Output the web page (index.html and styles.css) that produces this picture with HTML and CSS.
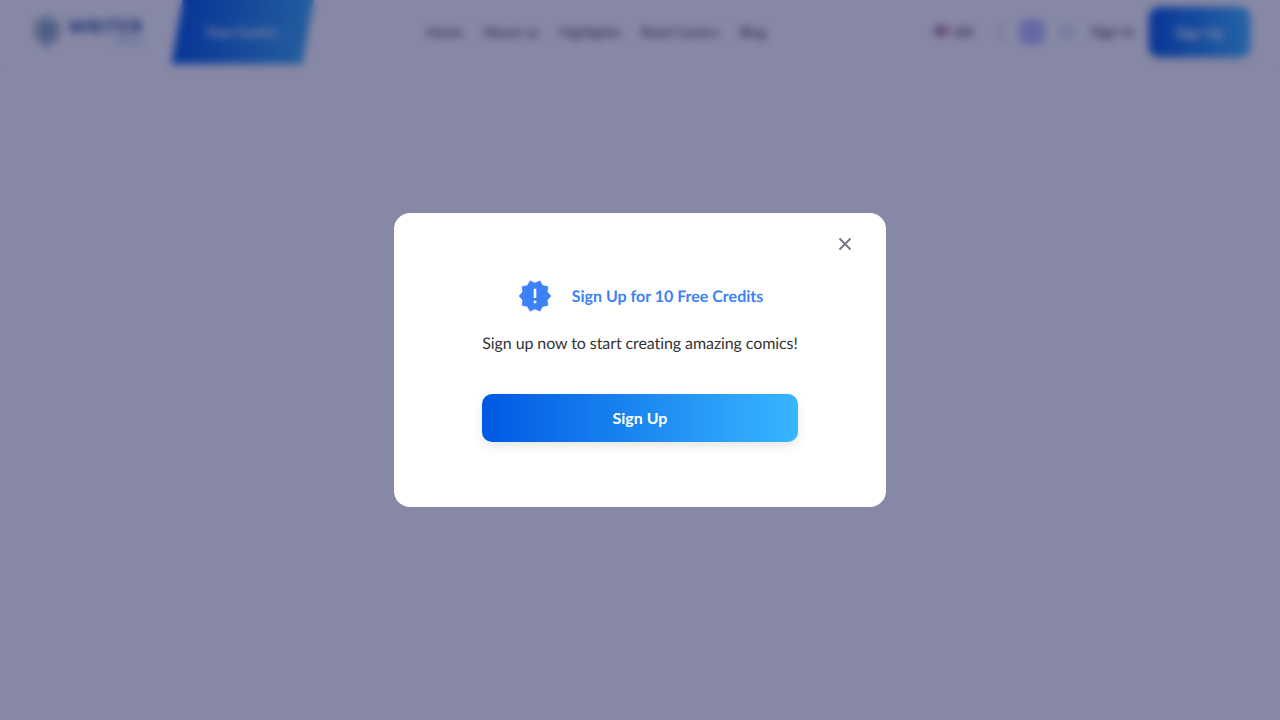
FILE: index.html
```html
<!DOCTYPE html>
<html lang="en">
<head>
<meta charset="utf-8">
<title>Sign Up for 10 Free Credits</title>
<link rel="stylesheet" href="styles.css">
</head>
<body>
<header class="topbar">
  <a class="logo">
    <svg class="logo-mark" viewBox="0 0 32 36"><path d="M16 1l13 7v15l-13 12L3 23V8z" fill="#a5bccd"/><circle cx="16" cy="17" r="6" fill="#7f9ab2"/></svg>
    <span class="logo-text"><b>WRITER</b><i>comics</i></span>
  </a>
  <a class="promo"><span>Free Comics</span></a>
  <nav class="nav">
    <a>Home</a><a>About us</a><a>Highlights</a><a>Read Comics</a><a>Blog</a>
  </nav>
  <div class="actions">
    <span class="lang"><svg class="flag" viewBox="0 0 14 10"><rect width="14" height="10" fill="#e7d3d8"/><rect width="14" height="3" fill="#c0394b"/><rect y="6" width="14" height="2" fill="#c0394b"/><rect width="6" height="5" fill="#44508f"/></svg>EN</span>
    <span class="faint"></span>
    <span class="square"></span>
    <span class="faint-blue"></span>
    <a class="signin">Sign In</a>
    <a class="signup-top">Sign Up</a>
  </div>
</header>
<div class="overlay">
  <section class="modal">
    <button class="close" aria-label="Close">
      <svg viewBox="0 0 14 14"><path d="M1.5 1.5l11 11M12.5 1.5l-11 11"/></svg>
    </button>
    <div class="title-row">
      <svg class="seal" viewBox="1 1 22 22"><path d="M23 12l-2.44-2.78.34-3.68-3.61-.82-1.89-3.18L12 3 8.6 1.54 6.71 4.72l-3.61.81.34 3.68L1 12l2.44 2.78-.34 3.69 3.61.82 1.89 3.18L12 21l3.4 1.46 1.89-3.18 3.61-.82-.34-3.68L23 12z"/><path class="mark" d="M11.1 7h1.8v6.4h-1.8zM11.1 15.2h1.8V17h-1.8z"/></svg>
      <h2 class="title">Sign Up for 10 Free Credits</h2>
    </div>
    <p class="lead">Sign up now to start creating amazing comics!</p>
    <button class="cta">Sign Up</button>
  </section>
</div>
</body>
</html>
```
FILE: styles.css
```css
* { box-sizing: border-box; }
html, body { height: 100%; }
body {
  margin: 0;
  background: #fff;
  font-family: Lato, "Open Sans", sans-serif;
  text-rendering: geometricPrecision;
  overflow: hidden;
}
.topbar {
  display: flex;
  align-items: center;
  height: 64px;
  padding-left: 30px;
  background: #fff;
  box-shadow: 0 1px 4px rgba(0,0,0,.04);
}
.logo { display: flex; align-items: center; gap: 4px; width: 117px; }
.logo-mark { width: 34px; height: 36px; }
.logo-text { display: flex; flex-direction: column; }
.logo-text b { font-size: 18px; line-height: 18px; font-weight: 900; letter-spacing: 1px; color: #1d4f9c; }
.logo-text i { font-size: 10px; line-height: 12px; font-style: normal; color: #5fb3dc; text-align: right; }
.promo {
  display: flex;
  align-items: center;
  justify-content: center;
  align-self: stretch;
  width: 131px;
  margin-left: 30px;
  background: linear-gradient(90deg, #0059e3, #38a8f0);
  transform: skewX(-10deg);
  color: #fff;
  font-size: 13px;
  font-weight: 700;
}
.promo span { transform: skewX(10deg); }
.nav {
  display: flex;
  gap: 20px;
  margin: 0 0 2px 118px;
  color: #333;
  font-size: 14px;
}
.actions {
  display: flex;
  align-items: center;
  margin-left: auto;
  margin-right: 30px;
}
.lang { display: flex; align-items: center; gap: 6px; font-size: 13px; font-weight: 700; color: #444; }
.flag { width: 14px; height: 10px; }
.faint { width: 10px; height: 18px; margin-left: 23px; background: #f0f0f0; border-radius: 3px; }
.square { width: 24px; height: 24px; margin-left: 14px; background: #b4bcff; border-radius: 4px; }
.faint-blue { width: 18px; height: 14px; margin-left: 14px; background: #dbe6f8; border-radius: 7px; }
.signin { margin-left: 15px; font-size: 15px; color: #333; }
.signup-top {
  display: flex;
  align-items: center;
  justify-content: center;
  width: 101px;
  height: 50px;
  margin-left: 14px;
  border-radius: 10px;
  background: linear-gradient(90deg, #0059e3, #38b6ff);
  box-shadow: 0 2px 6px rgba(0,0,0,.15);
  color: #fff;
  font-size: 14px;
  font-weight: 700;
}
.overlay {
  position: fixed;
  inset: 0;
  display: flex;
  align-items: center;
  justify-content: center;
  background: rgba(16,18,75,.5);
  backdrop-filter: blur(4px);
}
.modal {
  position: relative;
  display: flex;
  flex-direction: column;
  align-items: center;
  width: 492px;
  height: 294px;
  padding-top: 67px;
  border-radius: 16px;
  background: #fff;
}
.close {
  position: absolute;
  top: 24px;
  right: 34px;
  width: 14px;
  height: 14px;
  padding: 0;
  border: 0;
  background: none;
}
.close svg { display: block; width: 14px; height: 14px; fill: none; stroke: #75757f; stroke-width: 1.8; }
.title-row { display: flex; align-items: center; gap: 21px; height: 32px; margin-left: 2px; }
.seal { width: 32px; height: 32px; fill: #3b82f6; stroke: #3b82f6; stroke-width: .3; stroke-linejoin: round; }
.seal .mark { fill: #fff; stroke: none; }
.title { margin: 2px 0 0; font-size: 16px; line-height: 24px; font-weight: 700; color: #3b82f6; }
.lead { margin: 20px 0 0; font-size: 16px; line-height: 24px; letter-spacing: -.09px; color: #333; }
.cta {
  width: 316px;
  height: 48px;
  margin-top: 38px;
  padding: 0 0 2px;
  border: 0;
  border-radius: 10px;
  background: linear-gradient(90deg, #0059e3, #38b6ff);
  box-shadow: 0 4px 10px rgba(0,0,0,.1);
  color: #fff;
  font-family: inherit;
  font-size: 16px;
  font-weight: 700;
}
```
